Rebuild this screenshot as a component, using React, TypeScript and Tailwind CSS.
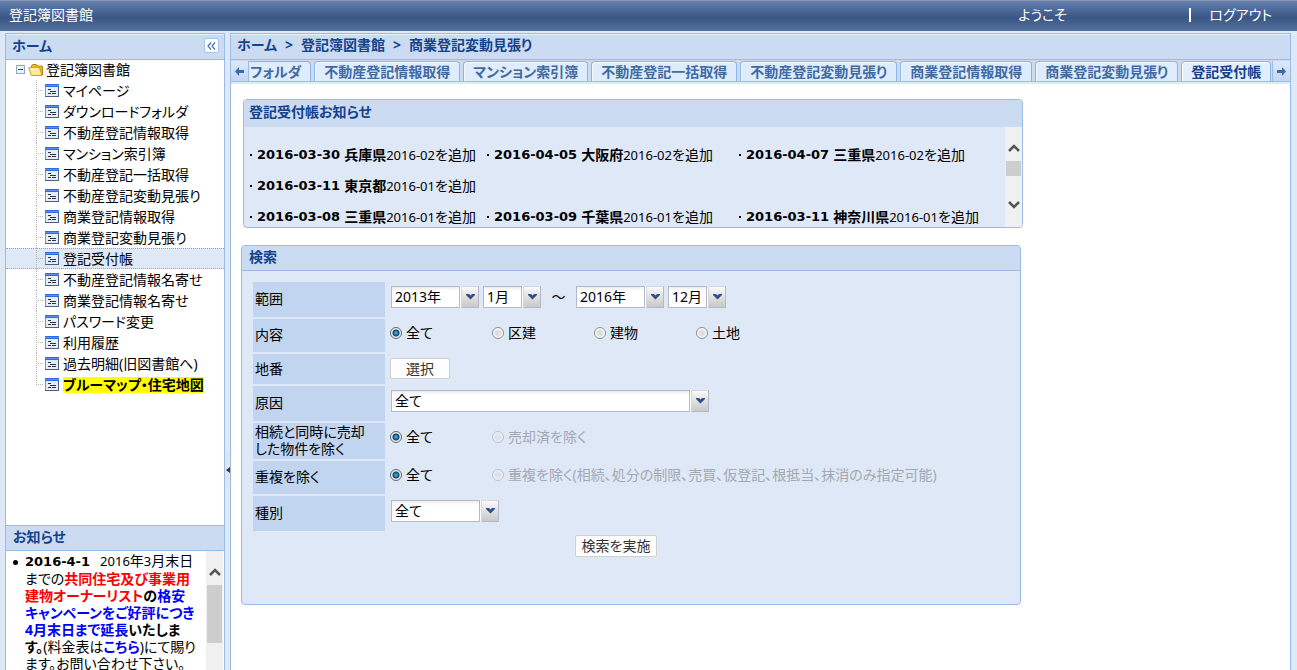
import type { ReactNode } from 'react';

const menuItems = [
  'マイページ',
  'ダウンロードフォルダ',
  '不動産登記情報取得',
  'マンション索引簿',
  '不動産登記一括取得',
  '不動産登記変動見張り',
  '商業登記情報取得',
  '商業登記変動見張り',
  '登記受付帳',
  '不動産登記情報名寄せ',
  '商業登記情報名寄せ',
  'パスワード変更',
  '利用履歴',
  '過去明細(旧図書館へ)',
  'ブルーマップ・住宅地図',
];

const tabs = [
  '不動産登記情報取得',
  'マンション索引簿',
  '不動産登記一括取得',
  '不動産登記変動見張り',
  '商業登記情報取得',
  '商業登記変動見張り',
];

const notices = [
  [
    { date: '2016-03-30', area: '兵庫県', month: '2016-02' },
    { date: '2016-04-05', area: '大阪府', month: '2016-02' },
    { date: '2016-04-07', area: '三重県', month: '2016-02' },
  ],
  [{ date: '2016-03-11', area: '東京都', month: '2016-01' }],
  [
    { date: '2016-03-08', area: '三重県', month: '2016-01' },
    { date: '2016-03-09', area: '千葉県', month: '2016-01' },
    { date: '2016-03-11', area: '神奈川県', month: '2016-01' },
  ],
];

function PageIcon() {
  return (
    <svg width="14" height="13" viewBox="0 0 14 13" className="shrink-0" shapeRendering="crispEdges">
      <rect width="14" height="13" fill="#7f93b5" />
      <rect x="1" y="3" width="12" height="9" fill="#e6edf7" />
      <rect width="14" height="3" fill="#2f6be0" />
      <rect y="1" width="14" height="1" fill="#5b90f0" />
      <rect x="13" y="3" width="1" height="10" fill="#4d5f85" />
      <rect y="12" width="14" height="1" fill="#4d5f85" />
      <path d="M3 5h3v1h-3zM5 7h6v1h-6zM3 9h3v1h-3zM7 9h4v1h-4z" fill="#2c3444" />
    </svg>
  );
}

function FolderIcon() {
  return (
    <svg width="16" height="14" viewBox="0 0 16 14" className="shrink-0">
      <path d="M3.500 11V2.500L5 1.500h3.500l1 1.500h4.500l.5 1v8z" fill="#e9b42c" stroke="#b5871a" />
      <path d="M.7 4.700h10.800l2.500 7.800H3.300z" fill="#fdeb8e" stroke="#cf9f22" />
      <path d="M2 6h8.500" stroke="#fffbd8" />
    </svg>
  );
}

function ScrollArrow({ up = false }: { up?: boolean }) {
  return (
    <svg width="12" height="8" viewBox="0 0 12 8" fill="none" stroke="#555" strokeWidth="2.500">
      <path d={up ? 'M1 7l5-5 5 5' : 'M1 1l5 5 5-5'} />
    </svg>
  );
}

function TabArrow({ right = false }: { right?: boolean }) {
  return (
    <svg width="9" height="9" viewBox="0 0 9 9" fill="#3f68a8">
      <path d={right ? 'M9 4.500L5 0v3H0v3h5v3z' : 'M0 4.500L4 0v3h5v3H4v3z'} />
    </svg>
  );
}

function Combo({ label, value, className }: { label: string; value: string; className: string }) {
  return (
    <div className={`relative h-[22px] ${className}`}>
      <select
        aria-label={label}
        className="block h-[22px] w-full appearance-none border border-[#b5b8c8] bg-white bg-linear-to-b from-[#eeeeee] to-white to-20% pl-[3px] text-sm leading-5 outline-none"
      >
        <option>{value}</option>
      </select>
      <span className="pointer-events-none absolute inset-y-0 right-0 w-5 border-l border-[#b5b8c8] bg-white pl-px">
        <span className="flex h-full items-center justify-center border border-t-[#d5d7e0] border-r-[#b5b8c8] border-b-[#b5b8c8] border-l-[#d5d7e0] bg-linear-to-b from-[#fafafa] to-[#c8c8c8]">
          <svg width="9" height="6" viewBox="0 0 9 6" fill="#2f4f93" className="mb-px">
            <path d="M0 0h3l1.500 1.500L6 0h3v1L4.500 5.500 0 1z" />
          </svg>
        </span>
      </span>
    </div>
  );
}

function Radio({
  name,
  children,
  checked = false,
  disabled = false,
}: {
  name: string;
  children: ReactNode;
  checked?: boolean;
  disabled?: boolean;
}) {
  return (
    <label
      className={`flex h-5 min-w-[102px] items-center gap-1 whitespace-nowrap ${disabled ? 'text-[#a3a8b3]' : ''}`}
    >
      <input
        type="radio"
        name={name}
        defaultChecked={checked}
        disabled={disabled}
        className="size-3 shrink-0 appearance-none rounded-full border border-[#8b8f94] bg-[radial-gradient(circle,#d4d6d8_0,#e4e4e4_3px,#ffffff_5px)] checked:border-[#5c6570] checked:bg-[radial-gradient(circle,#4cc0ee_0,#0f4368_3px,#dfe6ea_4px,#f8f8f8_5px)] disabled:opacity-40"
      />
      {children}
    </label>
  );
}

function FormRow({ label, height, children }: { label: ReactNode; height: string; children: ReactNode }) {
  return (
    <div className={`flex ${height}`}>
      <div className="flex w-[132px] shrink-0 items-center bg-[#c1d4f0] pb-[2px] pl-[2px] leading-[17px]">{label}</div>
      <div className="ml-[5px] flex flex-1 items-start pt-1">{children}</div>
    </div>
  );
}

function Sidebar() {
  return (
    <aside className="flex w-[220px] shrink-0 flex-col border border-b-0 border-[#99bbe8] bg-white">
      <div className="flex h-[26px] shrink-0 items-center justify-between border-b border-[#99bbe8] bg-[#cbdcf2] pr-[5px] pb-[2px] pl-[6px] font-bold text-[#15428b] shadow-[inset_0_1px_0_#e8f1fc]">
        <h2>ホーム</h2>
        <button
          type="button"
          aria-label="折りたたむ"
          className="flex size-[15px] items-center justify-center rounded-xs border border-[#a6c4ec] bg-white"
        >
          <svg width="9" height="8" viewBox="0 0 9 8" fill="none" stroke="#4b74b0" strokeWidth="1.300">
            <path d="M4 .5L1 4l3 3.500M8 .5L5 4l3 3.500" />
          </svg>
        </button>
      </div>

      <nav className="min-h-0 flex-1 overflow-hidden">
        <div className="flex h-5 items-center pl-[10px]">
          <svg width="10" height="10" viewBox="0 0 10 10" className="mr-[2px]" shapeRendering="crispEdges">
            <rect x=".5" y=".5" width="8" height="8" fill="#f0f4fa" stroke="#8fa5c6" />
            <path d="M2 4h5v1H2z" fill="#2b4a80" />
          </svg>
          <FolderIcon />
          <span className="ml-[2px]">登記簿図書館</span>
        </div>
        <ul>
          {menuItems.map((item, i) => {
            const selected = item === '登記受付帳';
            const last = i === menuItems.length - 1;
            return (
              <li
                key={item}
                className={`flex h-[21px] items-center border-y border-dotted pl-[30px] ${
                  selected ? 'border-[#a3a3a3] bg-[#dfe8f6]' : 'border-transparent'
                }`}
              >
                <span
                  className={`w-[2px] border-l border-dotted border-[#b5b5b5] ${last ? 'mb-[10px] h-[10px]' : 'h-[21px]'}`}
                />
                <span className="mr-[2px] w-[5px] border-t border-dotted border-[#b5b5b5]" />
                <PageIcon />
                <a
                  href="#"
                  className={`ml-1 leading-4 whitespace-nowrap ${last ? 'bg-[#ffff00] font-bold' : ''}`}
                >
                  {item}
                </a>
              </li>
            );
          })}
        </ul>
      </nav>

      <section className="flex h-[145px] shrink-0 flex-col border-t border-[#99bbe8]">
        <h2 className="h-[25px] shrink-0 border-b border-[#99bbe8] bg-[#cbdcf2] pl-[7px] leading-[22px] font-bold text-[#15428b]">
          お知らせ
        </h2>
        <div className="flex min-h-0 flex-1 pr-px">
          <ul className="flex-1 overflow-hidden pt-px pl-[19px] leading-[17px] whitespace-nowrap">
            <li className="relative">
              <span className="absolute top-2 -left-3 size-[5px] rounded-full bg-black" />
              <b className="font-['DejaVu_Sans'] text-[13px]">2016-4-1</b>
              <span className="ml-[10px]">
                <span className="text-[13px]">2016</span>年<span className="text-[13px]">3</span>月末日
              </span>
              <br />
              までの<b className="text-[#ff0000]">共同住宅及び事業用</b>
              <br />
              <b>
                <span className="text-[#ff0000]">建物オーナーリスト</span>の
                <span className="text-[#0000ff]">格安</span>
                <br />
                <span className="text-[#0000ff]">
                  キャンペーンをご好評につき
                  <br />
                  4月末日まで延長
                </span>
                いたしま
                <br />
                す。
              </b>
              (料金表は
              <a href="#" className="font-bold text-[#0000ff]">
                こちら
              </a>
              )にて賜り
              <br />
              ます。お問い合わせ下さい。
            </li>
          </ul>
          <div className="flex w-[17px] shrink-0 flex-col items-center bg-[#f0f0f0] pt-[17px]">
            <ScrollArrow up />
            <div className="mt-[9px] h-[58px] w-[15px] bg-[#cdcdcd]" />
          </div>
        </div>
      </section>
    </aside>
  );
}

function TabBar() {
  return (
    <div className="border-b border-[#dce9fa]">
      <div className="flex h-[22px] border-b border-[#99bbe8] bg-[#cbdcf2] pt-px">
        <button
          type="button"
          aria-label="前のタブ"
          className="flex w-[18px] shrink-0 items-center justify-center border-r border-[#99bbe8] bg-linear-to-b from-[#dce9fa] to-[#c2d7f2]"
        >
          <TabArrow />
        </button>
        <div role="tablist" className="flex min-w-0 flex-1 gap-[3px] overflow-hidden font-bold whitespace-nowrap">
          <button
            type="button"
            role="tab"
            className="rounded-tr border border-b-0 border-l-0 border-[#8db2e3] bg-[#deecfd] pr-[9px] pl-px leading-[18px] text-[#416aa3]"
          >
            フォルダ
          </button>
          {tabs.map((tab) => (
            <button
              key={tab}
              type="button"
              role="tab"
              className="rounded-t border border-b-0 border-[#8db2e3] bg-[#deecfd] px-[9px] leading-[18px] text-[#416aa3] shadow-[inset_1px_1px_0_#f4f9ff]"
            >
              {tab}
            </button>
          ))}
          <button
            type="button"
            role="tab"
            aria-selected="true"
            className="rounded-t border border-b-0 border-[#8db2e3] bg-[#e4effd] px-[9px] leading-[18px] text-[#15428b] shadow-[inset_1px_1px_0_#ffffff]"
          >
            登記受付帳
          </button>
        </div>
        <button
          type="button"
          aria-label="次のタブ"
          className="flex w-[18px] shrink-0 items-center justify-center border-l border-[#99bbe8] bg-linear-to-b from-[#dce9fa] to-[#c2d7f2]"
        >
          <TabArrow right />
        </button>
      </div>
      <div className="h-px bg-[#deecfd]" />
    </div>
  );
}

function NoticePanel() {
  return (
    <section className="ml-[2px] max-w-[780px] overflow-hidden rounded border border-[#99bbe8] bg-[#dfe8f6]">
      <h2 className="h-[27px] bg-[#cbdcf2] pl-[5px] leading-6 font-bold text-[#15428b]">登記受付帳お知らせ</h2>
      <div className="flex h-[100px]">
        <div className="flex-1 pt-3 pl-[5px]">
          {notices.map((row) => (
            <div key={row[0].date} className="grid h-[31px] grid-cols-[237px_252px_1fr] leading-[30px] whitespace-nowrap">
              {row.map((notice) => (
                <p key={notice.date} className="flex items-center">
                  <span className="mr-[5px] ml-px size-[2px] shrink-0 bg-black" />
                  <b className="mr-1 font-['DejaVu_Sans'] text-[13px]">{notice.date}</b>
                  <b>{notice.area}</b>
                  <span className="text-[13px]">{notice.month}</span>
                  <span>を追加</span>
                </p>
              ))}
            </div>
          ))}
        </div>
        <div className="flex w-[17px] shrink-0 flex-col items-center bg-[#f0f0f0] pt-[17px]">
          <ScrollArrow up />
          <div className="mt-[9px] mb-[25px] h-[15px] w-[15px] bg-[#cdcdcd]" />
          <ScrollArrow />
        </div>
      </div>
    </section>
  );
}

function SearchPanel() {
  return (
    <section className="mt-[17px] max-w-[780px] rounded border border-[#99bbe8] bg-[#dfe8f6]">
      <h2 className="h-[25px] rounded-t border-b border-[#99bbe8] bg-[#cbdcf2] pl-[7px] leading-[22px] font-bold text-[#15428b]">
        検索
      </h2>
      <form className="h-[333px] pt-[11px] pl-[11px]">
        <div className="flex flex-col gap-[2px]">
          <FormRow label="範囲" height="h-[35px]">
            <Combo label="開始年" value="2013年" className="ml-px w-[88px]" />
            <Combo label="開始月" value="1月" className="ml-1 w-[58px]" />
            <span className="w-[35px] text-center leading-[22px]">～</span>
            <Combo label="終了年" value="2016年" className="w-[88px]" />
            <Combo label="終了月" value="12月" className="ml-1 w-[58px]" />
          </FormRow>
          <FormRow label="内容" height="h-[33px]">
            <Radio name="content" checked>
              全て
            </Radio>
            <Radio name="content">区建</Radio>
            <Radio name="content">建物</Radio>
            <Radio name="content">土地</Radio>
          </FormRow>
          <FormRow label="地番" height="h-[30px]">
            <button
              type="button"
              className="h-[21px] w-[60px] rounded-xs border border-[#d0d0d0] bg-white leading-[18px] text-[#333]"
            >
              選択
            </button>
          </FormRow>
          <FormRow label="原因" height="h-[35px]">
            <Combo label="原因" value="全て" className="ml-px w-[318px]" />
          </FormRow>
          <FormRow
            label={
              <span>
                相続と同時に売却
                <br />
                した物件を除く
              </span>
            }
            height="h-[36px]"
          >
            <Radio name="sold" checked>
              全て
            </Radio>
            <Radio name="sold" disabled>
              売却済を除く
            </Radio>
          </FormRow>
          <FormRow label="重複を除く" height="h-[33px]">
            <Radio name="duplicate" checked>
              全て
            </Radio>
            <Radio name="duplicate" disabled>
              重複を除く(相続、処分の制限、売買、仮登記、根抵当、抹消のみ指定可能)
            </Radio>
          </FormRow>
          <FormRow label="種別" height="h-[35px]">
            <Combo label="種別" value="全て" className="ml-px w-[108px]" />
          </FormRow>
        </div>
        <button
          type="button"
          className="mt-1 ml-[322px] h-[22px] w-[82px] rounded-xs border border-[#d0d0d0] bg-white leading-5 text-[#333]"
        >
          検索を実施
        </button>
      </form>
    </section>
  );
}

export default function App() {
  return (
    <div className="flex h-screen flex-col overflow-hidden bg-[#dfe8f6] font-['Noto_Sans','Noto_Sans_CJK_JP',sans-serif] text-sm text-black [font-feature-settings:'palt']">
      <header className="flex h-[31px] shrink-0 items-center border-t border-[#8795ad] bg-linear-to-b from-[#6280b0] via-[#3a5685] via-55% to-[#54719f] pr-[25px] pb-[3px] pl-[9px] text-white">
        <h1 className="flex-1">登記簿図書館</h1>
        <span className="w-[171px]">ようこそ</span>
        <span className="mr-[18px] h-[14px] w-[2px] bg-white" />
        <a href="#">ログアウト</a>
      </header>

      <div className="flex min-h-0 flex-1 pt-[2px] pr-[6px] pl-[5px]">
        <Sidebar />

        {/* splitter */}
        <div className="flex w-[5px] shrink-0 items-center pt-[237px]">
          <button
            type="button"
            aria-label="サイドバーを閉じる"
            className="flex h-[35px] w-[5px] items-center justify-center rounded-xs bg-[#e3e3e8]"
          >
            <svg width="4" height="6" viewBox="0 0 4 6" fill="#333">
              <path d="M4 0v6L0 3z" />
            </svg>
          </button>
        </div>

        <main className="flex min-w-0 flex-1 flex-col border border-b-0 border-[#99bbe8] bg-white">
          <div className="flex h-[26px] shrink-0 gap-2 border-b border-[#99bbe8] bg-[#cbdcf2] pl-[6px] leading-[22px] font-bold text-[#15428b] shadow-[inset_0_1px_0_#e8f1fc]">
            <span>ホーム</span>
            <span>&gt;</span>
            <span>登記簿図書館</span>
            <span>&gt;</span>
            <span>商業登記変動見張り</span>
          </div>
          <TabBar />
          <div className="flex-1 overflow-hidden pt-[15px] pr-[10px] pl-[10px]">
            <NoticePanel />
            <SearchPanel />
          </div>
        </main>
      </div>
    </div>
  );
}
